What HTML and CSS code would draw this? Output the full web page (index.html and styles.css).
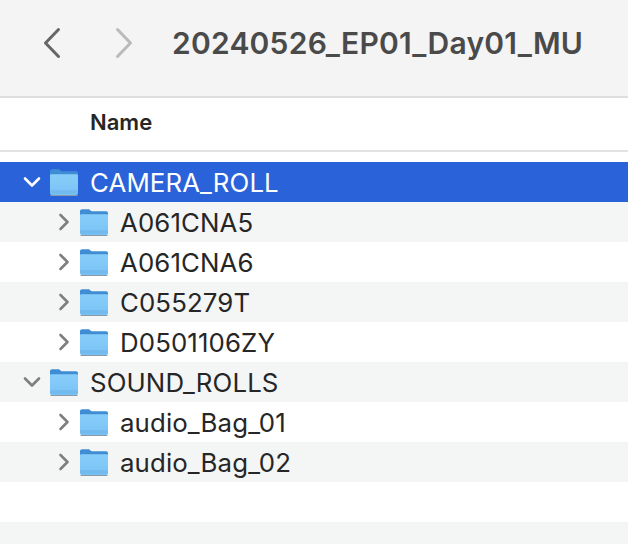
FILE: index.html
```html
<!DOCTYPE html>
<html lang="en">
<head>
    <meta charset="UTF-8">
    <title>20240526_EP01_Day01_MU</title>
    <link rel="stylesheet" href="styles.css">
</head>
<body>
    <svg class="defs" width="0" height="0">
        <defs>
            <linearGradient id="folderBody" x1="0" y1="0" x2="0" y2="1">
                <stop offset="0" stop-color="#88cefa"/>
                <stop offset="1" stop-color="#78c2f4"/>
            </linearGradient>
            <symbol id="folder" viewBox="0 0 30 30">
                <path d="M1 4.500C1 3.100 1.800 2.300 3.200 2.300H9.500C11 2.300 11.500 4.300 13 4.300H27C28.300 4.300 29 5.100 29 6.300V12H1Z" fill="#3f8dd4"/>
                <path d="M1 8.400C1 7.600 1.500 7.200 2.300 7.200H27.700C28.500 7.200 29 7.600 29 8.400V26C29 27.300 28.300 28 27 28H3C1.700 28 1 27.300 1 26Z" fill="url(#folderBody)"/>
                <path d="M1 24H29M1 26H29" stroke="#62aae0" stroke-width=".6" fill="none"/>
                <path d="M1.500 28.500H28.500" stroke="#8a96a3" stroke-width="1" fill="none"/>
            </symbol>
        </defs>
    </svg>

    <header class="toolbar">
        <button class="nav-btn">
            <svg width="20" height="32" viewBox="0 0 20 32"><path d="M16.500 2.500L3.500 16L16.500 29.500" class="nav-back"/></svg>
        </button>
        <button class="nav-btn nav-forward-btn">
            <svg width="20" height="32" viewBox="0 0 20 32"><path d="M3.500 2.500L16.500 16L3.500 29.500" class="nav-forward"/></svg>
        </button>
        <h1>20240526_EP01_Day01_MU</h1>
    </header>

    <div class="columns">
        <span>Name</span>
    </div>

    <ul class="tree">
        <li class="row level-0 selected">
            <svg class="disclosure" viewBox="0 0 18 18"><path d="M2 5.500L9 12.500L16 5.500"/></svg>
            <svg class="folder"><use href="#folder"/></svg>
            <span>CAMERA_ROLL</span>
        </li>
        <li class="row level-1 alt">
            <svg class="disclosure" viewBox="0 0 18 18"><path d="M5.500 2L12.500 9L5.500 16"/></svg>
            <svg class="folder"><use href="#folder"/></svg>
            <span>A061CNA5</span>
        </li>
        <li class="row level-1">
            <svg class="disclosure" viewBox="0 0 18 18"><path d="M5.500 2L12.500 9L5.500 16"/></svg>
            <svg class="folder"><use href="#folder"/></svg>
            <span>A061CNA6</span>
        </li>
        <li class="row level-1 alt">
            <svg class="disclosure" viewBox="0 0 18 18"><path d="M5.500 2L12.500 9L5.500 16"/></svg>
            <svg class="folder"><use href="#folder"/></svg>
            <span>C055279T</span>
        </li>
        <li class="row level-1">
            <svg class="disclosure" viewBox="0 0 18 18"><path d="M5.500 2L12.500 9L5.500 16"/></svg>
            <svg class="folder"><use href="#folder"/></svg>
            <span>D0501106ZY</span>
        </li>
        <li class="row level-0 alt">
            <svg class="disclosure" viewBox="0 0 18 18"><path d="M2 5.500L9 12.500L16 5.500"/></svg>
            <svg class="folder"><use href="#folder"/></svg>
            <span>SOUND_ROLLS</span>
        </li>
        <li class="row level-1">
            <svg class="disclosure" viewBox="0 0 18 18"><path d="M5.500 2L12.500 9L5.500 16"/></svg>
            <svg class="folder"><use href="#folder"/></svg>
            <span>audio_Bag_01</span>
        </li>
        <li class="row level-1 alt">
            <svg class="disclosure" viewBox="0 0 18 18"><path d="M5.500 2L12.500 9L5.500 16"/></svg>
            <svg class="folder"><use href="#folder"/></svg>
            <span>audio_Bag_02</span>
        </li>
        <li class="row"></li>
        <li class="row alt"></li>
    </ul>
</body>
</html>
```

FILE: styles.css
```css
html, body {
    margin: 0;
    padding: 0;
    height: 544px;
    overflow: hidden;
}
body {
    font-family: Inter, "Liberation Sans", sans-serif;
    background-color: #fff;
    color: #262626;
}
.defs {
    display: block;
    height: 0;
}
.toolbar {
    display: flex;
    align-items: center;
    box-sizing: border-box;
    height: 98px;
    padding-left: 42px;
    background-color: #f4f4f4;
    border-bottom: 2px solid #dedede;
}
.toolbar h1 {
    margin: 0 0 11px 0;
    font-size: 30px;
    font-weight: 600;
    letter-spacing: 0.23px;
    color: #4a4a4a;
}
.nav-btn {
    display: flex;
    width: 20px;
    height: 32px;
    margin: 0 0 11px 0;
    padding: 0;
    border: 0;
    background: none;
}
.nav-forward-btn {
    margin-left: 52px;
    margin-right: 38px;
}
.nav-back, .nav-forward {
    fill: none;
    stroke-width: 3px;
    stroke-linecap: round;
    stroke-linejoin: round;
}
.nav-back {
    stroke: #666;
}
.nav-forward {
    stroke: #bababa;
}
.columns {
    display: flex;
    align-items: center;
    box-sizing: border-box;
    height: 54px;
    padding-left: 90px;
    padding-bottom: 4px;
    border-bottom: 2px solid #e2e2e2;
    font-size: 22px;
    font-weight: 600;
}
.tree {
    list-style: none;
    margin: 10px 0 0 0;
    padding: 0;
}
.row {
    display: flex;
    align-items: center;
    box-sizing: border-box;
    height: 40px;
    font-size: 25.800px;
    letter-spacing: 0.12px;
}
.alt {
    background-color: #f4f5f5;
}
.selected {
    background-color: #2962d9;
    color: #fff;
}
.level-0 {
    padding-left: 23px;
}
.level-1 {
    padding-left: 55px;
}
.disclosure {
    width: 18px;
    height: 18px;
    fill: none;
    stroke: #7f7f7f;
    stroke-width: 2.600px;
    stroke-linecap: round;
    stroke-linejoin: round;
}
.selected .disclosure {
    stroke: #fff;
}
.folder {
    width: 30px;
    height: 30px;
    margin: 0 11px 0 8px;
}
.level-1 .folder {
    margin-left: 6px;
}
```
